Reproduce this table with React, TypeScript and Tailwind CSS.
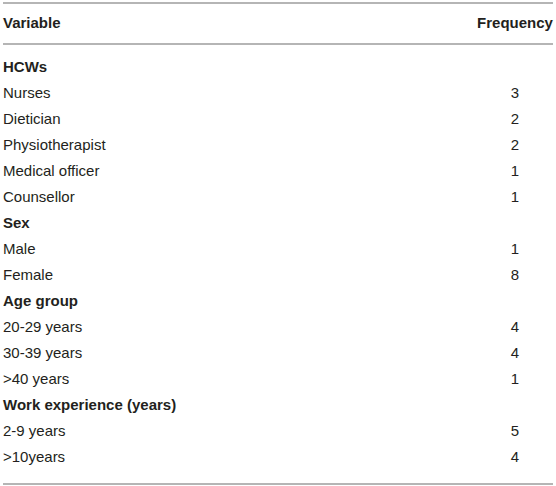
const rows: { label: string; value?: string; head?: boolean }[] = [
  { label: "HCWs", head: true },
  { label: "Nurses", value: "3" },
  { label: "Dietician", value: "2" },
  { label: "Physiotherapist", value: "2" },
  { label: "Medical officer", value: "1" },
  { label: "Counsellor", value: "1" },
  { label: "Sex", head: true },
  { label: "Male", value: "1" },
  { label: "Female", value: "8" },
  { label: "Age group", head: true },
  { label: "20-29 years", value: "4" },
  { label: "30-39 years", value: "4" },
  { label: ">40 years", value: "1" },
  { label: "Work experience (years)", head: true },
  { label: "2-9 years", value: "5" },
  { label: ">10years", value: "4" },
];

export default function App() {
  return (
    <div className="w-[556px] h-[486px] bg-white pt-[2px] pl-[3px] font-['Liberation_Sans',Arial,sans-serif] text-[15px] text-[#231f20]">
      <div className="w-[550px] border-t-2 border-b-2 border-[#b5b5b5]">
        <div className="flex h-[41px] items-center border-b-2 border-[#b5b5b5] font-bold">
          <div className="flex-1">Variable</div>
          <div className="w-[76px] text-center">Frequency</div>
        </div>
        <div className="pt-[9px] pb-[13px]">
          {rows.map((r) => (
            <div key={r.label} className="flex h-[26px] items-center">
              <div className={r.head ? "flex-1 font-bold" : "flex-1"}>{r.label}</div>
              <div className="w-[76px] text-center">{r.value}</div>
            </div>
          ))}
        </div>
      </div>
    </div>
  );
}
